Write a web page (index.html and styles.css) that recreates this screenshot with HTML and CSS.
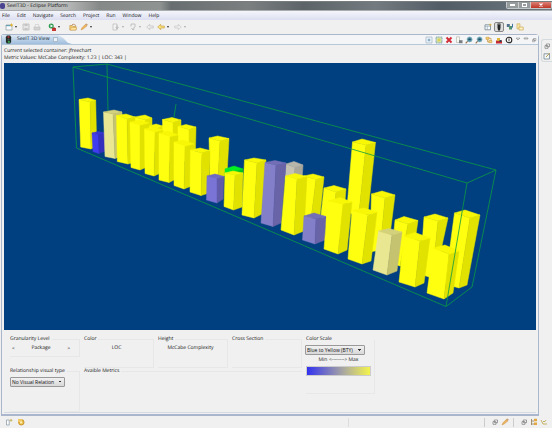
FILE: index.html
```html
<!DOCTYPE html>
<html lang="en">
<head>
<meta charset="utf-8">
<title>SeeIT3D - Eclipse Platform</title>
<link rel="stylesheet" href="styles.css">
</head>
<body>
<svg class="defs" aria-hidden="true">
  <symbol id="i-new" viewBox="0 0 8 8"><path d="M1 2h6v5H1z" fill="#f7fbff" stroke="#8b9a9c" stroke-width=".7"/><path d="M1 2h5v1.2H1z" fill="#6aa3b8"/><path d="M6.5.5v3M5 2h3" stroke="#e2b72c"/></symbol>
  <symbol id="i-save" viewBox="0 0 8 8"><path d="M1 1h6v6H1z" fill="#e6e6e6" stroke="#bbb" stroke-width=".8"/><path d="M2.5 1h3v2h-3zM2.5 5h3v2h-3z" fill="#c4c4c4"/></symbol>
  <symbol id="i-print" viewBox="0 0 8 8"><path d="M1 4h6v3H1z" fill="#d4d4d4" stroke="#bcbcbc" stroke-width=".6"/><path d="M2.5 1.5h3l.5 2.5H2z" fill="#f4f4f4" stroke="#c4c4c4" stroke-width=".6"/></symbol>
  <symbol id="i-run" viewBox="0 0 8 8"><circle cx="3.2" cy="3" r="2.5" fill="#2e9b50"/><path d="M2.5 1.6v2.8L5 3z" fill="#fff"/><path d="M4 5h4v3H4z" fill="#c93832"/><path d="M5 4.5h2v1H5z" fill="#8a3020"/></symbol>
  <symbol id="i-folder" viewBox="0 0 8 8"><path d="M.8 7V2.5h2.5l.8 1h3V7z" fill="#f3cf72" stroke="#bd8d3d" stroke-width=".6"/><path d="M2.5 2.5L4 1l3 1.5" fill="none" stroke="#b98555" stroke-width=".8"/><path d="M1 7l1.4-2.5h5.4L6.7 7z" fill="#ffe4a0" stroke="#c99a48" stroke-width=".5"/></symbol>
  <symbol id="i-torch" viewBox="0 0 8 8"><path d="M1 7l1-2.2L5.5 1.3l1.6 1.4-3.6 3z" fill="#efb65e" stroke="#d09a52" stroke-width=".6"/><path d="M5 1.5L6.6.4l1.2 1-1 1.5z" fill="#c9a17a"/></symbol>
  <symbol id="i-doc" viewBox="0 0 8 8"><path d="M1 1h4v6H1z" fill="#f3f3f3" stroke="#b9b9b9" stroke-width=".7"/><path d="M5 2.5v3M3.8 4.2L5 5.7l1.5-1.5" fill="none" stroke="#aaa" stroke-width=".8"/></symbol>
  <symbol id="i-hook" viewBox="0 0 8 8"><path d="M2 3.5V1h4v3L4 5.5V7M2.5 5L4 7l1.5-1" fill="none" stroke="#bbb" stroke-width=".9"/></symbol>
  <symbol id="i-back" viewBox="0 0 8 8"><path d="M.7 4l3-2.7V3h3.6v2H3.7v1.7z" fill="#fbe27c" stroke="#c39b38" stroke-width=".6"/></symbol>
  <symbol id="i-backoff" viewBox="0 0 8 8"><path d="M.7 4l3-2.7V3h3.6v2H3.7v1.7z" fill="#eee" stroke="#bbb" stroke-width=".6"/></symbol>
  <symbol id="i-fwdoff" viewBox="0 0 8 8"><path d="M7.3 4l-3-2.7V3H.7v2h3.6v1.7z" fill="#eee" stroke="#c4c4c4" stroke-width=".6"/></symbol>
  <symbol id="i-lights" viewBox="0 0 8 10"><path d="M2 .5h4l1 2v5l-1 2H2l-1-2v-5z" fill="#222c29"/><circle cx="4" cy="2.2" r="1.3" fill="#a82f36"/><circle cx="4" cy="5" r="1.2" fill="#455"/><circle cx="4.4" cy="7.8" r="1.3" fill="#36a04a"/></symbol>
  <symbol id="i-figure" viewBox="0 0 8 8"><path d="M2.500.5h3v4l-.5 3H3l-.5-3z" fill="#26282a"/><path d="M3.500 1.500h1" stroke="#b8b8b8" stroke-width=".8"/></symbol>
  <symbol id="i-plus" viewBox="0 0 8 8"><path d="M1 1h6v6H1z" fill="#eef5fa" stroke="#9eb3c2" stroke-width=".7"/><path d="M4 2.5v3M2.5 4h3" stroke="#568eb0" stroke-width=".8"/></symbol>
  <symbol id="i-pick" viewBox="0 0 8 8"><path d="M1 1h6v6H1z" fill="#d3e3a6" stroke="#7b9cc0" stroke-width=".9" stroke-dasharray="1.2 .5"/><path d="M2.5 4h3M4 2.5v3" stroke="#e2c93e"/></symbol>
  <symbol id="i-del" viewBox="0 0 8 8"><path d="M1.5 1.5l5 5M6.5 1.5l-5 5" stroke="#d22b35" stroke-width="1.9"/></symbol>
  <symbol id="i-copy" viewBox="0 0 8 8"><path d="M1.5.8h3v5.7h-3z" fill="#f7f7f4" stroke="#b2b0a0" stroke-width=".6"/><path d="M4 4.2h3.5v3H4z" fill="#777d80"/></symbol>
  <symbol id="i-zoom" viewBox="0 0 8 8"><path d="M.7 7.4l2.2-2.5" stroke="#9a7650" stroke-width="1.2"/><circle cx="4.6" cy="3.4" r="2.5" fill="#4c8ba0" stroke="#8bb5c2" stroke-width=".7"/><path d="M3.5 3.3h2.2" stroke="#153f50"/></symbol>
  <symbol id="i-links" viewBox="0 0 8 8"><path d="M1 1.3h3v2H1zM3.8 4.6h3v2h-3z" fill="#f5dd88" stroke="#d29b36" stroke-width=".7"/><path d="M4 2.3h2v2M2.5 3.5v2.3h1.2" fill="none" stroke="#c58c3c" stroke-width=".7"/></symbol>
  <symbol id="i-export" viewBox="0 0 8 8"><path d="M1 4.5h6v3H1z" fill="#c62b35"/><path d="M2 2h3v3H2z" fill="#e0b53e"/><path d="M4.5 4h2v2h-2z" fill="#35404a"/></symbol>
  <symbol id="i-clock" viewBox="0 0 8 8"><circle cx="4" cy="4" r="2.8" fill="#fff" stroke="#262626" stroke-width="1.1"/><path d="M4 2.3v3.2" stroke="#333" stroke-width=".9"/></symbol>
  <symbol id="i-menu" viewBox="0 0 8 8"><path d="M1.5 1.5h5L4 4z" fill="#fff" stroke="#777" stroke-width=".8"/></symbol>
  <symbol id="i-min" viewBox="0 0 8 8"><path d="M1.5 1.3h5v1.3h-5z" fill="#fff" stroke="#777" stroke-width=".8"/></symbol>
  <symbol id="i-restore" viewBox="0 0 8 8"><path d="M3.3 2H6.500v2.700h-3.200zM2 3.600h3v2.700H2z" fill="#fff" stroke="#777" stroke-width=".7"/></symbol>
  <symbol id="i-persp" viewBox="0 0 8 8"><path d="M1 1.8h5.500v5H1z" fill="#f7fbff" stroke="#71858f" stroke-width=".8"/><path d="M1 3.300h5.500M3.300 3.300v3.500" stroke="#829ba8" stroke-width=".6"/><path d="M6.300.600v2.500M5 1.800h2.600" stroke="#d6ae3b" stroke-width=".8"/></symbol>
  <symbol id="i-java" viewBox="0 0 8 8"><path d="M.800 1h3v3h-3z" fill="#53708e"/><path d="M3 3h3v3.500H3z" fill="#58966c"/><path d="M6.500.800v3.500L5 5.500" fill="none" stroke="#4474a4"/></symbol>
  <symbol id="i-res" viewBox="0 0 8 8"><path d="M1 .800h3v5H1z" fill="#f6e5a7" stroke="#cfa752" stroke-width=".6"/><path d="M3 4h4.200v3H3z" fill="#fff3c8" stroke="#cfa752" stroke-width=".7"/></symbol>
  <symbol id="i-edit" viewBox="0 0 8 8"><path d="M1 1.800h5.500v5.200H1z" fill="#f4f8fa" stroke="#748893" stroke-width=".8"/><path d="M3 5l3.800-4" stroke="#b6a052"/></symbol>
  <symbol id="i-view" viewBox="0 0 8 8"><path d="M1.500 2h2.700v5H1.500z" fill="#fff" stroke="#8295a0" stroke-width=".7"/><path d="M6 .800v3M4.500 2.300h3" stroke="#c3ac49" stroke-width=".8"/></symbol>
  <symbol id="i-tip" viewBox="0 0 8 8"><circle cx="4.300" cy="4.300" r="2.800" fill="#e9b532" stroke="#b67f28" stroke-width=".6"/><path d="M1 1h4v3H1z" fill="#f0c963"/><path d="M3 3.500h2.500v2H3z" fill="#f9eab2"/></symbol>
  <symbol id="i-tree" viewBox="0 0 8 8"><path d="M1.500 1v6M1.500 3H4M1.500 6H4" stroke="#917c53" stroke-width=".8"/><path d="M4 .800h3v2.500H4zM4 4.500h3V7H4z" fill="#e3a742"/></symbol>
  <symbol id="i-tools" viewBox="0 0 8 8"><path d="M1 2l2 4h4M3 3.500h2l1-1.500" fill="none" stroke="#c4b064"/></symbol>
</svg>

<div class="window">
  <header class="titlebar">
    <span class="app-icon"></span><span class="title">SeeIT3D - Eclipse Platform</span>
    <div class="captions"><button class="cap" aria-label="Minimize"><i class="dash"></i></button><button class="cap" aria-label="Restore"><i class="box"></i></button><button class="cap close" aria-label="Close"><svg viewBox="0 0 6 6"><path d="M1.500 1.500l3 3M4.500 1.500l-3 3" stroke="#fff" stroke-width="1.100"/></svg></button></div>
  </header>
  <nav class="menubar">
    <a href="#">File</a><a href="#">Edit</a><a href="#">Navigate</a><a href="#">Search</a><a href="#">Project</a><a href="#">Run</a><a href="#">Window</a><a href="#">Help</a>
  </nav>
  <div class="toolbar">
    <div class="tools first">
      <button class="tb drop" aria-label="New"><svg><use href="#i-new"/></svg></button>
      <button class="tb" aria-label="Save"><svg><use href="#i-save"/></svg></button>
      <button class="tb" aria-label="Print"><svg><use href="#i-print"/></svg></button>
    </div>
    <div class="tools"><button class="tb drop" aria-label="Run"><svg><use href="#i-run"/></svg></button></div>
    <div class="tools">
      <button class="tb" aria-label="Open type"><svg><use href="#i-folder"/></svg></button>
      <button class="tb drop" aria-label="Search"><svg><use href="#i-torch"/></svg></button>
    </div>
    <div class="tools nav">
      <button class="tb drop off" aria-label="Next annotation"><svg><use href="#i-doc"/></svg></button>
      <button class="tb drop off" aria-label="Previous annotation"><svg><use href="#i-hook"/></svg></button>
      <button class="tb" aria-label="Last edit"><svg><use href="#i-backoff"/></svg></button>
      <button class="tb drop" aria-label="Back"><svg><use href="#i-back"/></svg></button>
      <button class="tb drop off" aria-label="Forward"><svg><use href="#i-fwdoff"/></svg></button>
    </div>
    <div class="tools perspectives">
      <button class="tb" aria-label="Open perspective"><svg><use href="#i-persp"/></svg></button>
      <button class="tb active" aria-label="SeeIT 3D"><svg><use href="#i-figure"/></svg></button>
      <button class="tb" aria-label="Java"><svg><use href="#i-java"/></svg></button>
      <button class="tb" aria-label="Resource"><svg><use href="#i-res"/></svg></button>
    </div>
  </div>

  <div class="workbench">
    <main class="view">
      <div class="tabs">
        <div class="tab"><svg class="tab-icon"><use href="#i-lights"/></svg><span>SeeIT 3D View</span><button class="tab-close" aria-label="Close view"></button></div>
        <div class="view-tools">
          <button class="tb" aria-label="Add"><svg><use href="#i-plus"/></svg></button>
          <button class="tb" aria-label="Select"><svg><use href="#i-pick"/></svg></button>
          <button class="tb" aria-label="Delete"><svg><use href="#i-del"/></svg></button>
          <button class="tb" aria-label="Copy"><svg><use href="#i-copy"/></svg></button>
          <button class="tb" aria-label="Zoom in"><svg><use href="#i-zoom"/></svg></button>
          <button class="tb" aria-label="Zoom out"><svg><use href="#i-zoom"/></svg></button>
          <button class="tb" aria-label="Relations"><svg><use href="#i-links"/></svg></button>
          <button class="tb" aria-label="Export"><svg><use href="#i-export"/></svg></button>
          <button class="tb" aria-label="Reset"><svg><use href="#i-clock"/></svg></button>
          <button class="tb small" aria-label="View menu"><svg><use href="#i-menu"/></svg></button>
          <button class="tb small" aria-label="Minimize view"><svg><use href="#i-min"/></svg></button>
          <button class="tb small" aria-label="Restore view"><svg><use href="#i-restore"/></svg></button>
        </div>
      </div>
      <div class="content">
        <div class="info"><p>Current selected container: jfreechart</p><p>Metric Values: McCabe Complexity: 1.23 | LOC: 343 |</p></div>
        <svg class="scene" id="scene" viewBox="4 63 532 267" role="img" aria-label="3D metrics view"></svg>
        <div class="panel">
          <fieldset class="group level"><legend>Granularity Level</legend>
            <div class="stepper"><button aria-label="Coarser">&lt;</button><span>Package</span><button aria-label="Finer">&gt;</button></div></fieldset>
          <fieldset class="group"><legend>Color</legend><p class="metric">LOC</p></fieldset>
          <fieldset class="group"><legend>Height</legend><p class="metric">McCabe Complexity</p></fieldset>
          <fieldset class="group"><legend>Cross Section</legend></fieldset>
          <fieldset class="group scale"><legend>Color Scale</legend>
            <select class="combo" aria-label="Color scale"><option>Blue to Yellow (BTY)</option></select>
            <p class="range">Min &lt;--------&gt; Max</p><div class="ramp"></div></fieldset>
          <fieldset class="group"><legend>Relationship visual type</legend>
            <select class="combo relation" aria-label="Relationship visual type"><option>No Visual Relation</option></select></fieldset>
          <fieldset class="group metrics"><legend>Avaible Metrics</legend></fieldset>
        </div>
      </div>
    </main>
    <aside class="trim"><button class="tb" aria-label="Restore editors"><svg><use href="#i-restore"/></svg></button><button class="tb" aria-label="Editor area"><svg><use href="#i-edit"/></svg></button></aside>
  </div>
  <footer class="status">
    <button class="tb" aria-label="Fast view"><svg><use href="#i-view"/></svg></button>
    <button class="tb" aria-label="Tip"><svg><use href="#i-tip"/></svg></button>
    <div class="status-line"></div>
    <div class="status-line short"></div>
    <div class="status-group"><button class="tb" aria-label="Restore"><svg><use href="#i-restore"/></svg></button><button class="tb" aria-label="Search view"><svg><use href="#i-torch"/></svg></button></div>
    <div class="status-group"><button class="tb" aria-label="Restore"><svg><use href="#i-restore"/></svg></button><button class="tb" aria-label="Outline"><svg><use href="#i-tree"/></svg></button><button class="tb" aria-label="Tools"><svg><use href="#i-tools"/></svg></button></div>
  </footer>
</div>
<script src="scene.js"></script>
</body>
</html>
```
FILE: styles.css
```css
* { box-sizing: border-box; }
body { margin: 0; background: #fff; color: #111; font: 5px/7px "Open Sans", "Noto Sans", sans-serif; text-rendering: geometricPrecision; }
p { margin: 0; }
button { padding: 0; border: 0; background: none; color: inherit; font: inherit; }
.defs { position: absolute; width: 0; height: 0; }
.window { margin: 1px 3px 0 0; background: #f0f0f0; }

.titlebar { display: flex; align-items: center; height: 10px; border-top: 1px solid #777c7c; border-bottom: 1px solid #a9adb0; background: linear-gradient(90deg, #c9cbca 0, #b8bab9 12%, #858988 18%, #8f9493 29%, #686d6f 31%, #7b7f80 45%, #5d6468 55%, #747b80 68%, #525c65 80%, #6e7880 100%); }
.app-icon { width: 5px; height: 6px; border-radius: 2px; background: #4a4390; }
.title { flex: 1; padding-left: 2px; color: #111; }
.captions { display: flex; align-self: flex-start; height: 7px; border: 1px solid #c3c7ca; border-top: 0; border-radius: 0 0 2px 2px; overflow: hidden; }
.cap { display: flex; align-items: center; justify-content: center; width: 12px; border-right: 1px solid #ccc; background: #969b9e; }
.cap.close { width: 20px; border: 0; background: linear-gradient(#dc8277, #bf3526); }
.cap svg { width: 6px; height: 6px; }
.dash { width: 5px; height: 2px; background: #fff; }
.box { width: 5px; height: 4px; border: 1px solid #fff; }

.menubar { display: flex; align-items: flex-end; gap: 7px; height: 9px; padding-left: 2px; background: linear-gradient(#f4f5fb, #dcdff1); }
.menubar a { color: #111; text-decoration: none; }

.toolbar { display: flex; align-items: center; height: 14px; padding: 0 28px 0 5px; }
.tools { display: flex; align-items: center; gap: 3px; margin-right: 7px; }
.tools.nav { margin-left: 11px; gap: 3px; }
.tools.perspectives { margin: 0 0 0 auto; gap: 2px; }
.tb { display: flex; align-items: center; height: 9px; }
.tb svg { display: block; width: 8px; height: 8px; }
.tb.drop::after { content: ""; margin: 0 2px; border: 1px solid transparent; border-top: 2px solid #333; border-bottom: 0; }
.tb.off::after { border-top-color: #aaa; }
.tb.active { border: 1px solid #888; border-radius: 2px; background: #ddd; height: 10px; }

.workbench { display: flex; align-items: flex-start; gap: 2px; }
.view { flex: 1; min-width: 0; margin-left: 1px; border: 1px solid #a9b6cb; border-width: 1px 1px 2px; border-radius: 3px 4px 0 0; }
.tabs { display: flex; justify-content: space-between; height: 10px; border-bottom: 1px solid #b5c8d9; background: #f4f5f7; }
.tab { display: flex; align-items: center; width: 70px; padding-left: 3px; color: #123; background: linear-gradient(#dce7f3, #9fbedd); clip-path: polygon(0 0, 80% 0, 87% 30%, 94% 85%, 100% 100%, 0 100%); }
.tab-icon { width: 7px; height: 9px; margin-right: 5px; }
.tab-close { width: 5px; height: 5px; margin-left: 3px; border: 1px solid #aebdcb; background: #e9f0f6; }
.view-tools { display: flex; align-items: center; gap: 2px; padding-right: 1px; }
.tb.small svg { width: 6px; height: 6px; }
.content { padding: 0 2px 1px; }
.info { height: 18px; padding-top: 3px; }
.scene { display: block; width: 100%; background: #004080; }

.panel { display: grid; grid-template-columns: repeat(4, 74px) 69px; grid-template-rows: 32px 44px; padding: 6px 0 0 6px; height: 83px; border-bottom: 1px solid #d4dae2; }
.group { min-width: 0; margin: 0 4px 0 0; padding: 0 2px; border: 1px solid #e7e7e7; border-left: 0; }
.group legend { padding: 0 2px 0 0; margin-left: -2px; white-space: nowrap; }
.level { align-self: start; height: 21px; }
.stepper { display: flex; justify-content: space-between; margin-top: 2px; padding: 0 7px 0 0; }
.metric { margin-top: 2px; padding-right: 4px; text-align: center; white-space: nowrap; }
.scale { grid-row: span 2; height: 58px; margin-right: 0; padding: 0 3px 0 0; border-top-color: transparent; }
.scale legend { margin-left: 0; }
.metrics { grid-column: span 3; border-width: 1px 0 0; }
.combo { display: block; appearance: none; width: 60px; height: 10px; margin: 2px 0 0 -1px; padding: 0 7px 0 1px; border: 1px solid #999; border-radius: 1px; color: #111; font: inherit; background: linear-gradient(135deg, #333 50%, transparent 50%) calc(100% - 2px) 3px / 2px 2px no-repeat, linear-gradient(225deg, #333 50%, transparent 50%) calc(100% - 4px) 3px / 2px 2px no-repeat, linear-gradient(#f1f1f1, #d8d8d8); }
.combo.relation { width: 55px; margin-left: -2px; }
.range { margin: 2px 0; text-align: center; }
.ramp { height: 10px; border: 1px solid #ccc; background: linear-gradient(90deg, #3232f0, #aaa8a0 58%, #f4f44c); }

.trim { display: flex; flex-direction: column; align-items: center; gap: 1px; width: 11px; margin-top: 5px; padding: 1px 0; border: 1px solid #d5dade; border-right: 0; border-radius: 3px 0 0 3px; }
.status { display: flex; align-items: center; gap: 4px; height: 12px; padding: 0 4px 0 5px; }
.status-line { flex: 5; height: 9px; border-right: 1px solid #ddd; }
.status-line.short { flex: 2; border: 0; }
.status-group { display: flex; gap: 2px; padding-left: 6px; border-left: 1px solid #ccc; }
```
FILE: scene.js
```js
// Face colours per metric level: [left, right, top]
const palette = {
  y: ['#ffff10', '#e2e200', '#f7f706'],
  b: ['#403cf0', '#3430bd', '#3935d5'],
  p: ['#7974d6', '#615ca9', '#6e69c2'],
  q: ['#837fc9', '#6963a8', '#736fb6'],
  c: ['#e9e792', '#c5c270', '#d4d17c'],
  g: ['#c5c2b4', '#a9a69a', '#b7b5a9'],
  n: ['#00e82c', '#00c020', '#00f020']
};

// Corners of each column: top left, back, right, front, then base left, front, right
const columns = [
  ['y', 79,99.5, 88,98, 95.7,100.3, 90,102, 80.7,147, 91,149, 96.7,146],
  ['y', 134.5,117, 145,115, 152,118, 145,120, 135,150, 145,152, 152,150],
  ['y', 149,126, 156,124, 163,126, 156,129, 149,150, 156,152, 163,150],
  ['y', 162.5,119.5, 172,117.5, 181,120, 173,122.5, 163,160, 173,162, 181,160],
  ['y', 178,126.5, 186,124.5, 196,127, 189,129.500, 178,160, 189,162, 195.500,150],
  ['y', 209,138, 217.500,136, 229,138.500, 220,141, 210,176, 218,178, 227,175],
  ['n', 225,169, 234,166, 243,169, 235,171, 225,178, 235,180, 243,178],
  ['g', 286,164, 294,161.500, 303,165, 295,167.500, 285,180, 294,182, 302,180],
  ['y', 304,176, 313,174, 324,177, 316,179.500, 303,216, 311,219, 320,215],
  ['y', 324,188, 334,185.500, 346,189, 336,192, 321,215, 332,240, 342,238],
  ['y', 352.500,142, 362,139, 375.500,142.500, 366,145, 347,208, 358,222, 368,212],
  ['y', 371.500,194, 382,191, 395,195, 385,198, 370,252, 380,250, 390,235],
  ['y', 395,220, 404,216.500, 418,220.500, 408,224, 391,263, 400,266, 412,262],
  ['y', 424,217, 435,214, 448,218, 438,221, 420,274, 432,278, 441,250],
  ['y', 454.500,213, 465,210, 480,215, 470,218, 445,284, 459,288, 467,285],
  ['b', 92,133, 98,131.500, 105,133, 98.500,134.500, 93,151.500, 99,153.500, 105,151],
  ['c', 103.500,112, 114,110, 122,112, 113,114, 105,156.500, 115,158.500, 122,156],
  ['y', 116.500,115.500, 126,114, 135,117, 127,119, 117.300,161.500, 128,164, 135,162],
  ['y', 130,122, 140,120, 149,123, 140,125, 131,167.500, 140,170, 149,166],
  ['y', 144.500,129, 153,127, 163,130, 155,132, 145,173.500, 154,176, 163,172],
  ['y', 159,133, 168,131, 178,135, 170,136.500, 159,180, 169,182.500, 178,178],
  ['y', 174,142, 183,140, 194,144, 185,146, 174,185.500, 184,189, 194,185],
  ['y', 190.500,150, 200,148, 210,150.500, 202,153, 190,192, 201,195.500, 209,193],
  ['p', 207,176, 215,174, 224,176.500, 217,178, 206.500,200, 217,203, 223,199],
  ['y', 225,173, 233,171, 243,173, 235,175, 224,206.500, 233.500,210, 242,207],
  ['y', 244.500,160, 254,158, 266,160, 257,163, 242,215, 254,218, 262,214],
  ['q', 265,162.500, 275,160.500, 286,163, 276,165, 261,223, 273,226.500, 281,223],
  ['y', 285.500,176, 295,173.500, 307,176.500, 297,179, 281,230, 294,235, 304,231],
  ['q', 304,216, 314,213, 326,216.500, 316,219, 302.500,240, 315,244, 325,240],
  ['y', 328,201, 340,197.500, 352,202, 343,204, 324,249, 338,254, 347,250],
  ['y', 352,210.500, 364,208, 377,212, 368,215, 348,259, 362,264, 371,261],
  ['c', 378.500,231, 389,228.500, 402,232, 392,235, 373,270, 387,275, 397,271],
  ['y', 404,236, 415,232.500, 430,238, 420,241, 399,282, 415,287, 424,283],
  ['y', 433,248, 445,245, 459,251, 449,254, 427,293, 444,299, 453,293]
];

const face = (points, fill) => `<polygon points="${points.join(' ')}" fill="${fill}" stroke="${fill}" stroke-width=".5"/>`;
const line = d => `<path d="${d}" fill="none" stroke="#0b9b42" stroke-width=".8"/>`;

const drawn = columns.map(([tone, ...c]) => {
  const [left, right, top] = palette[tone];
  const [L, B, R, F, l, f, r] = Array.from({ length: 7 }, (_, i) => c.slice(i * 2, i * 2 + 2));
  return face([L, F, f, l], left) + face([F, R, r, f], right) + face([L, B, R, F], top);
}).join('');

document.getElementById('scene').innerHTML =
  line('M107 64L108 112M176 104L174 117M107 64L496 170L472 287L446 306.500') +
  drawn +
  line('M107 64L73 67L76.500 148L446 306.500L467 183L496 170M73 67L467 183');
```
